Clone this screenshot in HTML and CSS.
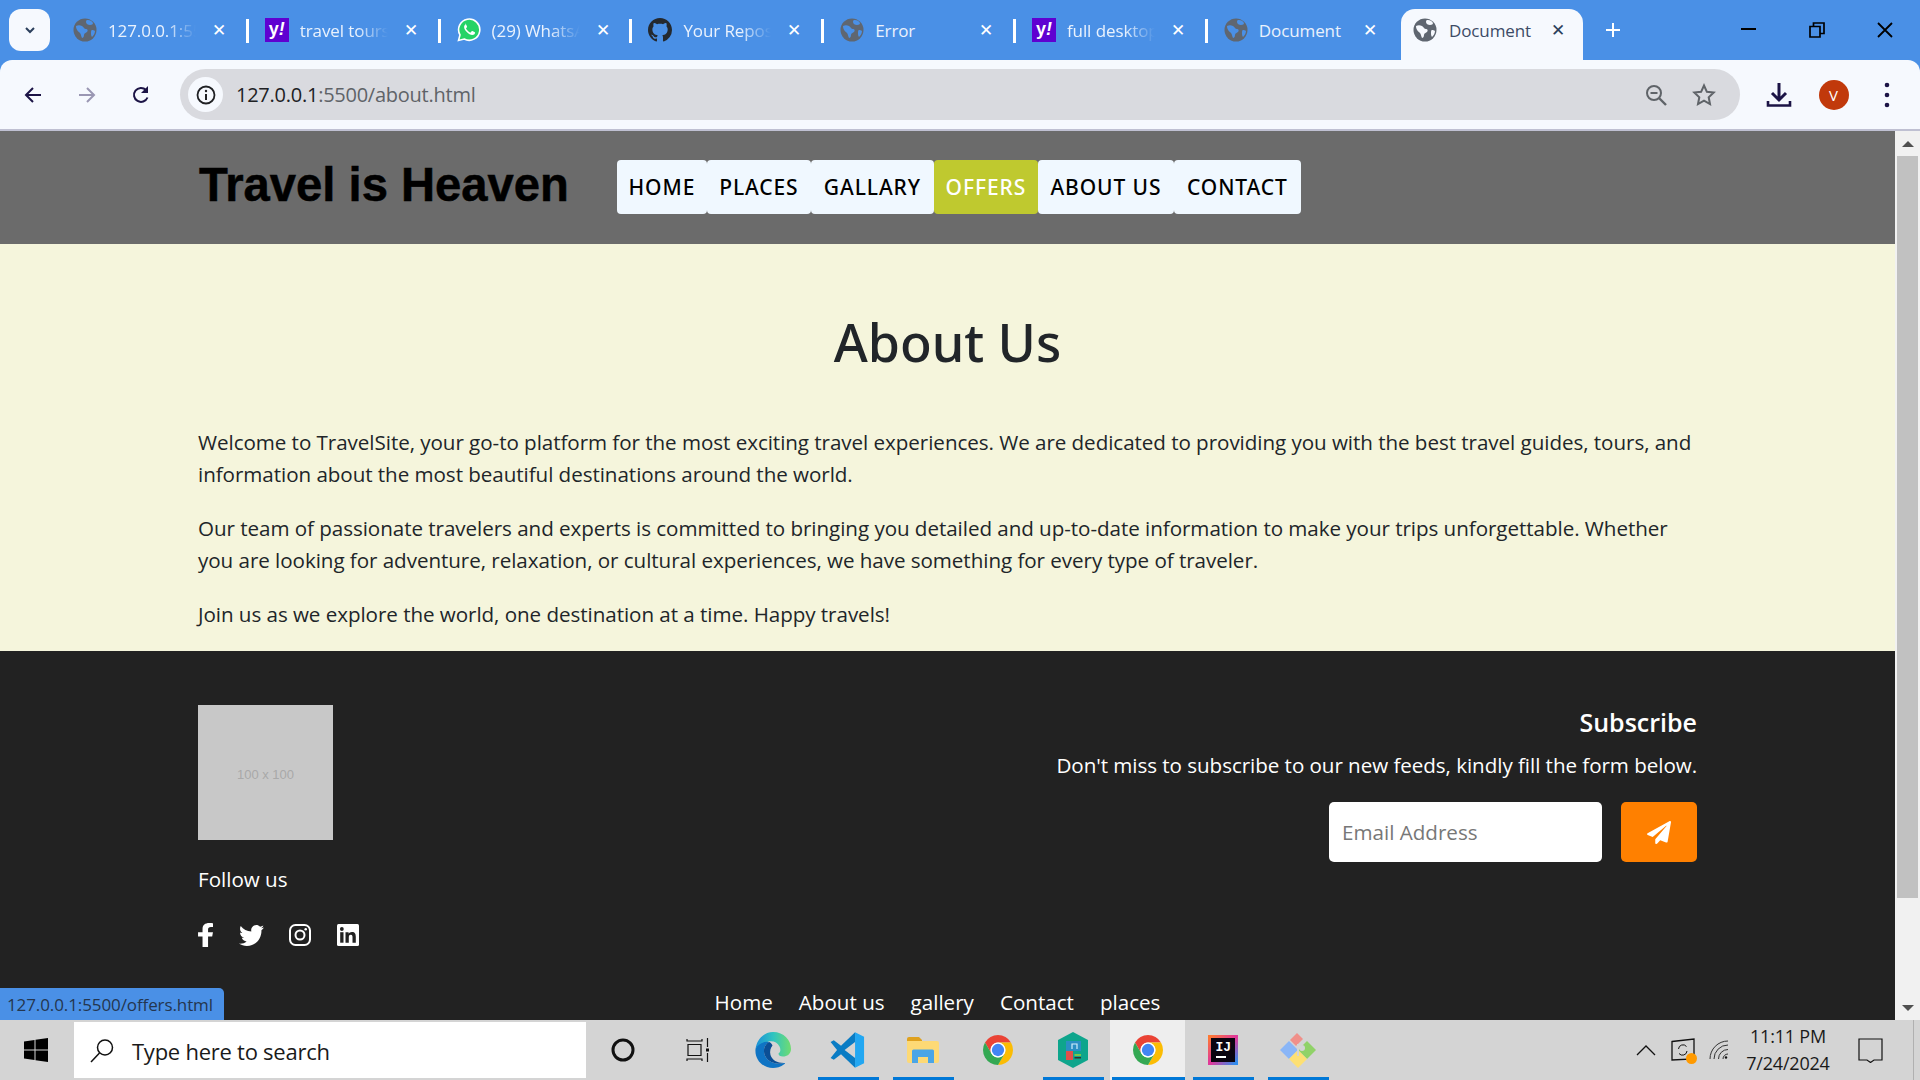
FILE: index.html
```html
<!DOCTYPE html>
<html lang="en">
<head>
    <meta charset="UTF-8">
    <title>Document</title>
    <link rel="stylesheet" href="styles.css">
</head>
<body>
    <svg class="defs" width="0" height="0">
        <symbol id="globe" viewBox="0 0 24 24">
            <circle cx="12" cy="12" r="11.5" fill="#5f6670"/>
            <path fill="currentColor" d="M3 8c2-1 4-1 6 0s2 3 4 3 2 2 1 3-3 1-3 3-1 3-2 3c-1-2-1-4-2-5s-4-3-4-7zM15 2c2 0 4 1 5 3 0 1-1 2-3 2s-4-1-4-3 1-2 2-2zM19 12c1 0 2 0 3 1 0 3-2 5-3 6-1-1-1-3-1-4s0-3 1-3z"/>
        </symbol>
        <symbol id="chrome" viewBox="0 0 48 48">
            <path fill="#ea4335" d="M6.68 14A20 20 0 0 1 41.32 14H24a10 10 0 0 0-8.66 15z"/>
            <path fill="#fbbc04" d="M41.32 14A20 20 0 0 1 24 44l8.66-15A10 10 0 0 0 24 14z"/>
            <path fill="#34a853" d="M24 44A20 20 0 0 1 6.68 14l8.66 15a10 10 0 0 0 17.32 0z"/>
            <circle cx="24" cy="24" r="10" fill="#fff"/>
            <circle cx="24" cy="24" r="8.2" fill="#4285f4"/>
        </symbol>
    </svg>

    <div class="browser">
        <div class="tabstrip">
            <div class="tab-list-btn">
                <svg width="14" height="14" viewBox="0 0 14 14"><path d="M3 5l4 4 4-4" fill="none" stroke="#2b3f5c" stroke-width="2"/></svg>
            </div>
            <div class="tab">
                <svg class="favicon"><use href="#globe"/></svg>
                <span class="tab-title">127.0.0.1:5500</span>
                <span class="tab-close">✕</span>
            </div>
            <div class="tab">
                <span class="favicon yahoo">y<i>!</i></span>
                <span class="tab-title">travel tours</span>
                <span class="tab-close">✕</span>
            </div>
            <div class="tab">
                <svg class="favicon" viewBox="0 0 24 24">
                    <path fill="#25d366" stroke="#fff" stroke-width="1.6" d="M1.5 22.5l1.5-5.6A10.6 10.6 0 1 1 7.2 21z"/>
                    <path fill="#fff" d="M8.6 6.6c-.5 0-1.500.9-1.500 2.400s1 3.200 2.700 5 3.900 3.100 5.500 3.100 2.600-1 2.700-2c0-.6-.1-.8-.5-1l-2.100-1c-.4-.2-.7 0-.9.300l-.8 1c-.2.2-.4.200-.8 0-1.500-.7-3-2.100-3.800-3.600-.1-.3 0-.5.200-.7l.6-.8c.2-.3.200-.5.100-.8l-.9-2.100c-.2-.5-.5-.7-.9-.8z"/>
                </svg>
                <span class="tab-title">(29) WhatsApp</span>
                <span class="tab-close">✕</span>
            </div>
            <div class="tab">
                <svg class="favicon" viewBox="0 0 16 16"><path fill="#24292f" d="M8 0C3.58 0 0 3.58 0 8c0 3.54 2.29 6.53 5.47 7.59.4.07.55-.17.55-.38 0-.19-.01-.82-.01-1.49-2.01.37-2.53-.49-2.69-.94-.09-.23-.48-.94-.82-1.13-.28-.15-.68-.52-.01-.53.63-.01 1.08.58 1.23.82.72 1.21 1.87.87 2.33.66.07-.52.28-.87.51-1.07-1.78-.2-3.64-.89-3.64-3.95 0-.87.31-1.59.82-2.15-.08-.2-.36-1.02.08-2.12 0 0 .67-.21 2.2.82.64-.18 1.32-.27 2-.27.68 0 1.36.09 2 .27 1.53-1.04 2.2-.82 2.2-.82.44 1.1.16 1.92.08 2.12.51.56.82 1.27.82 2.15 0 3.07-1.87 3.75-3.65 3.95.29.25.54.73.54 1.48 0 1.07-.01 1.93-.01 2.2 0 .21.15.46.55.38A8.013 8.013 0 0016 8c0-4.420-3.58-8-8-8z"/></svg>
                <span class="tab-title">Your Repositories</span>
                <span class="tab-close">✕</span>
            </div>
            <div class="tab">
                <svg class="favicon"><use href="#globe"/></svg>
                <span class="tab-title plain">Error</span>
                <span class="tab-close">✕</span>
            </div>
            <div class="tab">
                <span class="favicon yahoo">y<i>!</i></span>
                <span class="tab-title">full desktop</span>
                <span class="tab-close">✕</span>
            </div>
            <div class="tab no-sep">
                <svg class="favicon"><use href="#globe"/></svg>
                <span class="tab-title plain">Document</span>
                <span class="tab-close">✕</span>
            </div>
            <div class="tab active">
                <svg class="favicon"><use href="#globe"/></svg>
                <span class="tab-title plain">Document</span>
                <span class="tab-close">✕</span>
            </div>
            <svg class="new-tab" width="18" height="18" viewBox="0 0 18 18"><path d="M9 2v14M2 9h14" stroke="#fff" stroke-width="2"/></svg>
            <div class="win-btns">
                <svg width="16" height="16" viewBox="0 0 16 16"><path d="M0 7h15" stroke="#000" stroke-width="2"/></svg>
                <svg width="16" height="16" viewBox="0 0 16 16"><path d="M1 4.500h10v10.500h-10zM4.500 4V1h10.500v10.500h-3.500" fill="none" stroke="#000" stroke-width="1.700"/></svg>
                <svg width="16" height="16" viewBox="0 0 16 16"><path d="M1 1l14 14M15 1L1 15" stroke="#000" stroke-width="1.800"/></svg>
            </div>
        </div>

        <div class="toolbar">
            <div class="nav-icons">
                <svg width="20" height="20" viewBox="0 0 20 20"><path d="M18 10H3M10 3l-7 7 7 7" fill="none" stroke="#1c1446" stroke-width="2"/></svg>
                <svg width="20" height="20" viewBox="0 0 20 20"><path d="M2 10h15M10 3l7 7-7 7" fill="none" stroke="#9a97b3" stroke-width="2"/></svg>
                <svg width="20" height="20" viewBox="0 0 20 20"><path d="M16.500 12.500A7 7 0 1 1 15 5" fill="none" stroke="#1c1446" stroke-width="2"/><path d="M17 1v7h-7z" fill="#1c1446"/></svg>
            </div>
            <div class="omnibox">
                <div class="site-info">
                    <svg width="20" height="20" viewBox="0 0 20 20"><circle cx="10" cy="10" r="8.500" fill="none" stroke="#202124" stroke-width="1.800"/><path d="M10 9v6" stroke="#202124" stroke-width="2"/><circle cx="10" cy="6" r="1.200" fill="#202124"/></svg>
                </div>
                <span class="url"><span class="url-host">127.0.0.1</span>:5500/about.html</span>
                <svg class="omni-icon" width="24" height="24" viewBox="0 0 24 24"><circle cx="10" cy="10" r="7" fill="none" stroke="#5f6368" stroke-width="2"/><path d="M15 15l7 7" stroke="#5f6368" stroke-width="2.400"/><path d="M6.500 10h7" stroke="#5f6368" stroke-width="2"/></svg>
                <svg class="omni-icon" width="24" height="24" viewBox="0 0 24 24"><path d="M12 2.500l2.900 6.300 6.800.8-5 4.700 1.300 6.800-6-3.400-6 3.400 1.300-6.800-5-4.700 6.800-.8z" fill="none" stroke="#5f6368" stroke-width="2"/></svg>
            </div>
            <div class="toolbar-end">
                <svg width="26" height="26" viewBox="0 0 26 26"><path d="M13 1v16M6 11l7 7 7-7" fill="none" stroke="#1c1446" stroke-width="3"/><path d="M2 19v4.500h22V19" fill="none" stroke="#1c1446" stroke-width="2.600"/></svg>
                <span class="avatar">V</span>
                <svg width="8" height="28" viewBox="0 0 8 28"><circle cx="4" cy="4" r="2.300" fill="#1c1446"/><circle cx="4" cy="14" r="2.300" fill="#1c1446"/><circle cx="4" cy="24" r="2.300" fill="#1c1446"/></svg>
            </div>
        </div>

        <div class="viewport">
            <div class="page">
                <header class="site-header">
                    <h1 class="brand">Travel is Heaven</h1>
                    <nav class="site-nav">
                        <a class="nav-link n-home">HOME</a>
                        <a class="nav-link n-places">PLACES</a>
                        <a class="nav-link n-gallary">GALLARY</a>
                        <a class="nav-link n-offers">OFFERS</a>
                        <a class="nav-link n-about">ABOUT US</a>
                        <a class="nav-link n-contact">CONTACT</a>
                    </nav>
                </header>

                <section class="about">
                    <h2 class="about-title">About Us</h2>
                    <p>Welcome to TravelSite, your go-to platform for the most exciting travel experiences. We are dedicated to providing you with the best travel guides, tours, and information about the most beautiful destinations around the world.</p>
                    <p>Our team of passionate travelers and experts is committed to bringing you detailed and up-to-date information to make your trips unforgettable. Whether you are looking for adventure, relaxation, or cultural experiences, we have something for every type of traveler.</p>
                    <p>Join us as we explore the world, one destination at a time. Happy travels!</p>
                </section>

                <footer class="site-footer">
                    <div class="footer-top">
                        <div class="footer-left">
                            <div class="placeholder">100 x 100</div>
                            <p class="follow">Follow us</p>
                            <div class="social">
                                <svg class="s-fb" width="15" height="24" viewBox="22 0 272 512" preserveAspectRatio="none"><path fill="#fff" d="M279.14 288l14.22-92.66h-88.91v-60.13c0-25.35 12.42-50.06 52.24-50.06h40.42V6.26S260.43 0 225.36 0c-73.22 0-121.08 44.38-121.08 124.72v70.62H22.89V288h81.39v224h100.17V288z"/></svg>
                                <svg class="s-tw" width="25" height="21" viewBox="0 48 512 416" preserveAspectRatio="none"><path fill="#fff" d="M459.37 151.716c.325 4.548.325 9.097.325 13.645 0 138.72-105.583 298.558-298.558 298.558-59.452 0-114.68-17.219-161.137-47.106 8.447.974 16.568 1.299 25.34 1.299 49.055 0 94.213-16.568 130.274-44.832-46.132-.975-84.792-31.188-98.112-72.772 6.498.974 12.995 1.624 19.818 1.624 9.421 0 18.843-1.3 27.614-3.573-48.081-9.747-84.143-51.98-84.143-102.985v-1.299c13.969 7.797 30.214 12.67 47.431 13.319-28.264-18.843-46.781-51.005-46.781-87.391 0-19.492 5.197-37.36 14.294-52.954 51.655 63.675 129.3 105.258 216.365 109.807-1.624-7.797-2.599-15.918-2.599-24.04 0-57.828 46.782-104.934 104.934-104.934 30.213 0 57.502 12.67 76.67 33.137 23.715-4.548 46.456-13.32 66.599-25.34-7.798 24.366-24.366 44.833-46.132 57.827 21.117-2.273 41.584-8.122 60.426-16.243-14.292 20.791-32.161 39.308-52.628 54.253z"/></svg>
                                <svg class="s-ig" width="22" height="22" viewBox="0 0 22 22"><rect x="1" y="1" width="20" height="20" rx="5.500" fill="none" stroke="#fff" stroke-width="2"/><circle cx="11" cy="11" r="4.500" fill="none" stroke="#fff" stroke-width="2"/><circle cx="16.700" cy="5.300" r="1.300" fill="#fff"/></svg>
                                <svg class="s-in" width="22" height="22" viewBox="0 0 22 22"><rect width="22" height="22" rx="1.500" fill="#fff"/><rect x="3.200" y="8.200" width="3.300" height="10.500" fill="#222"/><circle cx="4.850" cy="5" r="1.900" fill="#222"/><path fill="#222" d="M8.500 8.200h3.100v1.500c.6-1 1.700-1.800 3.300-1.800 3.200 0 3.900 2.100 3.900 4.900v5.900h-3.300v-5.200c0-1.300 0-2.800-1.700-2.800s-2 1.300-2 2.700v5.300H8.500z"/></svg>
                            </div>
                        </div>
                        <div class="footer-right">
                            <h3 class="sub-title">Subscribe</h3>
                            <p class="sub-text">Don't miss to subscribe to our new feeds, kindly fill the form below.</p>
                            <form class="sub-form">
                                <input class="sub-input" type="text" placeholder="Email Address">
                                <button class="sub-btn" type="button">
                                    <svg width="24" height="23" viewBox="0 0 512 512" preserveAspectRatio="none"><path fill="#fff" d="M476 3.2L12.500 270.600c-18.100 10.400-15.800 35.600 2.200 43.200L121 358.400l287.300-253.200c5.500-4.900 13.300 2.600 8.600 8.300L176 407v80.500c0 23.600 28.500 32.900 42.500 15.800L282 426l124.600 52.200c14.200 6 30.400-2.900 33-18.200l72-432C515 7.800 493.300-6.800 476 3.200z"/></svg>
                                </button>
                            </form>
                        </div>
                    </div>
                    <nav class="footer-nav">
                        <a>Home</a>
                        <a>About us</a>
                        <a>gallery</a>
                        <a>Contact</a>
                        <a>places</a>
                    </nav>
                </footer>
            </div>
            <div class="scrollbar">
                <span class="arrow up"></span>
                <span class="thumb"></span>
                <span class="arrow down"></span>
            </div>
            <div class="status-bubble">127.0.0.1:5500/offers.html</div>
        </div>
    </div>

    <div class="taskbar">
        <div class="start">
            <svg width="24" height="24" viewBox="0 0 24 24"><path fill="#000" d="M0 3.500l10.500-1.500v9.500H0zM11.500 1.800L24 0v11.500H11.500zM0 12.500h10.500V22L0 20.500zM11.500 12.500H24V24l-12.500-1.800z"/></svg>
        </div>
        <div class="search">
            <svg width="25" height="25" viewBox="0 0 25 25"><circle cx="15" cy="9.500" r="7.500" fill="none" stroke="#111" stroke-width="1.500"/><path d="M9.500 15L1 24" stroke="#111" stroke-width="1.500"/></svg>
            <span>Type here to search</span>
        </div>
        <div class="slot first">
            <svg width="24" height="24" viewBox="0 0 24 24"><circle cx="12" cy="12" r="10" fill="none" stroke="#111" stroke-width="3"/></svg>
        </div>
        <div class="slot">
            <svg width="24" height="24" viewBox="0 0 24 24"><path d="M1 1v2h15V1M1 23v-2h15v2M2 6.500h13v11H2zM21.500 0v9M21.500 15v9" fill="none" stroke="#111" stroke-width="1.200"/><rect x="20" y="10.500" width="3" height="3" fill="#111"/></svg>
        </div>
        <div class="slot">
            <svg width="36" height="36" viewBox="0 0 36 36">
                <defs>
                    <linearGradient id="edgeTop" x1="0" y1="0.500" x2="1" y2="0.500"><stop offset="0" stop-color="#1a8fd8"/><stop offset="0.500" stop-color="#30c4c0"/><stop offset="1" stop-color="#70dc70"/></linearGradient>
                </defs>
                <path fill="url(#edgeTop)" d="M0.500 17C2 6 10 0 18 0c11 0 18 8 18 17 0 5-4 7.500-8 7.500-3 0-4.500-1.200-4.500-3 2-1.500 2.500-3.700 1-7C22 9 15 8 10 11 5 14 2 15 .5 17z"/>
                <path fill="#0f74c4" d="M.5 17C3 12 9 9 14 10 8.500 13 7.500 20 11 25.500c3 4.500 10 7.500 18 5.500 1-.3 1.500.3.5 1C25.500 35 21.500 36 18 36 8 36-.5 28 .5 17z"/>
                <path fill="#0b4f96" d="M14 10c-5.500 3-6.500 10-3 15.500 3 4.500 10 7.500 18 5.500-7 0-12-3-13.500-8-1-4 0-7 2-9.500-1-2-2.500-3.500-3.500-3.500z"/>
            </svg>
        </div>
        <div class="slot running">
            <svg width="37" height="36" viewBox="0 0 100 100"><path fill="#22a7f2" d="M71 1l25 12v74L71 99z"/><path fill="#0a7cc4" d="M71 1L32 38 12 23 3 28l18 22L3 72l9 5 20-15 39 37V72L42 50l29-22z"/></svg>
        </div>
        <div class="slot running">
            <svg width="32" height="26" viewBox="0 0 32 26"><path fill="#dfa11e" d="M0 2a2 2 0 0 1 2-2h10l3 3v3H0z"/><path fill="#fdd975" d="M0 4h30a2 2 0 0 1 2 2v18a2 2 0 0 1-2 2H2a2 2 0 0 1-2-2z"/><path fill="#4aa5e6" d="M5 26V14a1.500 1.500 0 0 1 1.500-1.500h19A1.500 1.500 0 0 1 27 14v12h-6v-6H11v6z"/></svg>
        </div>
        <div class="slot">
            <svg width="36" height="36"><use href="#chrome"/></svg>
        </div>
        <div class="slot running">
            <svg width="32" height="36" viewBox="0 0 32 36"><path fill="#0ea58c" d="M16 0l15 8v20l-15 8-15-8V8z"/><rect x="9" y="9" width="15" height="10" fill="#2a8fc4"/><path d="M15 17v-5h5v5" fill="none" stroke="#cfeefa" stroke-width="1.200"/><rect x="9" y="19" width="7" height="9" fill="#e0504a"/><rect x="17.500" y="22" width="6.500" height="2" fill="#7cc44a"/><rect x="17.500" y="25" width="6.500" height="1.500" fill="#333"/></svg>
        </div>
        <div class="slot running active">
            <svg width="36" height="36"><use href="#chrome"/></svg>
        </div>
        <div class="slot running">
            <div class="ij-logo">
                <span class="ij-text">IJ</span>
                <span class="ij-bar"></span>
            </div>
        </div>
        <div class="slot running">
            <svg width="36" height="36" viewBox="0 0 36 36"><path fill="#8ab6f7" d="M0 18l9-9 9 9-9 9z"/><path fill="#f0908a" d="M10 8l7-7 6 6-7 7z"/><path fill="#90d268" d="M18 18l9-9 9 9-9 9z"/><path fill="#fde074" d="M9 27l9-9 9 9-9 9z"/><circle cx="22" cy="16" r="3" fill="#d4d4d4"/><path d="M18 12v12" stroke="#d4d4d4" stroke-width="2"/></svg>
        </div>
        <div class="tray">
            <div class="tray-slot">
                <svg width="20" height="12" viewBox="0 0 20 12"><path d="M1 11l9-9 9 9" fill="none" stroke="#111" stroke-width="1.300"/></svg>
            </div>
            <div class="tray-slot badge-host">
                <svg width="24" height="24" viewBox="0 0 24 24"><path d="M1 3.500L23 1v20l-22 1z" fill="none" stroke="#111" stroke-width="1.300"/><path d="M7.500 11a4.500 4.500 0 0 1 8-2.500M16 13a4.500 4.500 0 0 1-8 2.500" fill="none" stroke="#111"/></svg>
                <span class="tray-badge"></span>
            </div>
            <div class="tray-slot">
                <svg width="20" height="20" viewBox="0 0 20 20"><path d="M1 19a18 18 0 0 1 18-18M5 19a14 14 0 0 1 14-14M9.500 19A9.500 9.500 0 0 1 19 9.500M14 19a5 5 0 0 1 5-5" fill="none" stroke="#333" stroke-width="1"/><circle cx="17" cy="17.500" r="1.200" fill="#111"/></svg>
            </div>
            <div class="clock">
                <span>11:11 PM</span>
                <span>7/24/2024</span>
            </div>
            <div class="notify">
                <svg width="25" height="25" viewBox="0 0 25 25"><path d="M1 1h23v21h-8l-3.500 2.500L9 22H1z" fill="none" stroke="#111" stroke-width="1.200"/></svg>
            </div>
            <div class="show-desktop"></div>
        </div>
    </div>
</body>
</html>
```

FILE: styles.css
```css
* {
    box-sizing: border-box;
}

html, body {
    margin: 0;
    padding: 0;
    height: 100%;
    overflow: hidden;
}

body {
    width: 1920px;
    height: 1080px;
    font-family: "Open Sans", "Noto Sans", sans-serif;
    display: flex;
    flex-direction: column;
    background-color: #4a90e6;
}

.defs {
    position: absolute;
}

p, h1, h2, h3 {
    margin: 0;
}

.browser {
    height: 1020px;
    display: flex;
    flex-direction: column;
}

/* tab strip */
.tabstrip {
    height: 60px;
    flex: none;
    display: flex;
    align-items: flex-start;
    padding: 9px 0 0 9px;
    background-color: #4a90e6;
}

.tab-list-btn {
    width: 41px;
    height: 42px;
    margin-right: 5px;
    background-color: #f6f9fe;
    border-radius: 12px;
    display: flex;
    align-items: center;
    justify-content: center;
}

.tab {
    width: 191.8px;
    height: 51px;
    padding: 9px 0 0 18px;
    display: flex;
    align-items: flex-start;
    position: relative;
    color: #4a90e6;
}

.tab::after {
    content: "";
    position: absolute;
    right: -2px;
    top: 10px;
    width: 3px;
    height: 24px;
    background-color: #fff;
}

.tab.no-sep {
    width: 195.2px;
}

.tab.no-sep::after, .tab.active::after {
    display: none;
}

.favicon {
    width: 24px;
    height: 24px;
    flex: none;
}

.yahoo {
    background-color: #5f01d1;
    color: #fff;
    font-family: "Liberation Sans", sans-serif;
    font-weight: bold;
    font-size: 18px;
    line-height: 22px;
    text-align: center;
}

.tab-title {
    width: 88px;
    margin-left: 11px;
    font-size: 17px;
    line-height: 26px;
    color: #eaf2fd;
    white-space: nowrap;
    overflow: hidden;
    letter-spacing: -0.1px;
    -webkit-mask-image: linear-gradient(to right, #000 65%, transparent 100%);
}

.tab-title.plain {
    -webkit-mask-image: none;
}

.tab-close {
    position: absolute;
    left: 156px;
    top: 8px;
    width: 16px;
    font-size: 17px;
    line-height: 26px;
    text-align: center;
    color: #fff;
}

.tab.active {
    width: 182px;
    padding: 9px 0 0 12px;
    background-color: #f6f9fe;
    border-radius: 14px 14px 0 0;
    color: #f6f9fe;
}

.tab.active::before {
    content: "";
    position: absolute;
    left: -12px;
    right: -12px;
    bottom: 0;
    height: 12px;
    z-index: -1;
    background: #f6f9fe;
}

.tab.active .tab-title {
    color: #3c4b66;
    width: 100px;
    margin-left: 12px;
}

.tab.active .tab-close {
    left: 149px;
    color: #2b3f5c;
}

.tab.active .favicon {
    color: #f6f9fe;
}

.new-tab {
    margin: 12px 0 0 21px;
}

.win-btns {
    margin-left: auto;
    width: 205px;
    padding: 13px 27px 0 26px;
    display: flex;
    justify-content: space-between;
}

/* toolbar */
.toolbar {
    height: 71px;
    flex: none;
    padding: 9px 0 9px 0;
    display: flex;
    background-color: #f6f9fe;
    border-bottom: 2px solid #bfc0d2;
    border-radius: 12px 12px 0 0;
    position: relative;
}

.nav-icons {
    width: 180px;
    padding: 0 29px 0 23px;
    display: flex;
    align-items: center;
    justify-content: space-between;
}

.omnibox {
    width: 1560px;
    height: 51px;
    padding: 0 24px 0 8px;
    display: flex;
    align-items: center;
    gap: 24px;
    border-radius: 26px;
    background-color: #d9dadf;
}

.site-info {
    width: 35px;
    height: 35px;
    margin-right: -11px;
    border-radius: 50%;
    background-color: #f6f9fe;
    display: flex;
    align-items: center;
    justify-content: center;
}

.url {
    flex: 1;
    font-size: 20px;
    letter-spacing: -0.25px;
    color: #5f6368;
}

.url-host {
    color: #202124;
}

.toolbar-end {
    flex: 1;
    padding: 0 29px 0 26px;
    display: flex;
    align-items: center;
    justify-content: space-between;
}

.avatar {
    width: 30px;
    height: 30px;
    margin-right: 8px;
    border-radius: 50%;
    background-color: #c1390b;
    color: #fff;
    font-size: 15px;
    line-height: 30px;
    text-align: center;
}

/* page */
.viewport {
    flex: 1;
    min-height: 0;
    display: flex;
    position: relative;
}

.page {
    flex: 1;
    overflow: hidden;
    display: flex;
    flex-direction: column;
}

.site-header {
    height: 113px;
    flex: none;
    padding: 0 0 0 199px;
    display: flex;
    align-items: center;
    gap: 48px;
    background-color: #6b6b6b;
}

.brand {
    font-family: "Liberation Sans", Arial, sans-serif;
    font-size: 47.2px;
    font-weight: bold;
    color: #000;
    margin-top: -6px;
    -webkit-text-stroke: 0.5px #000;
}

.site-nav {
    display: flex;
    margin-top: -1px;
}

.nav-link {
    height: 54px;
    display: flex;
    align-items: center;
    justify-content: center;
    background-color: #f0f8ff;
    border-radius: 4px;
    color: #000;
    font-family: "Noto Sans", "Open Sans", sans-serif;
    font-size: 21px;
    font-weight: 500;
    letter-spacing: 0.9px;
}

.n-home { width: 90px; }
.n-places { width: 104px; }
.n-gallary { width: 123px; }
.n-offers { width: 104px; background-color: #bfc92f; color: #fff; }
.n-about { width: 136px; }
.n-contact { width: 127px; }

.about {
    height: 407px;
    flex: none;
    padding: 67px 198px 0;
    background-color: #f5f5dc;
    color: #212529;
    font-size: 20.6px;
    line-height: 32px;
    letter-spacing: -0.05px;
}

.about-title {
    font-family: "Noto Sans", "Open Sans", sans-serif;
    font-size: 52px;
    font-weight: 500;
    line-height: 62px;
    text-align: center;
    margin-bottom: 52.5px;
}

.about p {
    margin-bottom: 22px;
}

.site-footer {
    flex: 1;
    background-color: #222;
    color: #fff;
    padding: 54px 198px 0;
    display: flex;
    flex-direction: column;
}

.footer-top {
    height: 281px;
    display: flex;
    justify-content: space-between;
}

.placeholder {
    width: 135px;
    height: 135px;
    padding-top: 4px;
    background-color: #c8c8c8;
    color: #a9a9a9;
    font-family: "Liberation Sans", sans-serif;
    font-size: 13px;
    display: flex;
    align-items: center;
    justify-content: center;
}

.follow {
    margin-top: 23px;
    font-size: 20.6px;
    line-height: 32px;
}

.social {
    margin-top: 28px;
    display: flex;
    align-items: center;
}

.s-tw { margin-left: 26px; }
.s-ig { margin-left: 25px; }
.s-in { margin-left: 26px; }

.footer-right {
    text-align: right;
}

.sub-title {
    margin-top: -1px;
    font-size: 25px;
    font-weight: 600;
    line-height: 36px;
}

.sub-text {
    margin-top: 9px;
    font-size: 20.6px;
    line-height: 32px;
    letter-spacing: -0.05px;
}

.sub-form {
    margin-top: 21px;
    display: flex;
    justify-content: flex-end;
    gap: 19px;
}

.sub-input {
    width: 273px;
    height: 60px;
    padding: 0 13px;
    border: 0;
    border-radius: 5px;
    background-color: #fff;
    font-family: inherit;
    font-size: 20.6px;
}

.sub-input::placeholder {
    color: #777;
}

.sub-btn {
    width: 76px;
    height: 60px;
    padding: 0;
    border: 0;
    border-radius: 5px;
    background-color: #ff8000;
    display: flex;
    align-items: center;
    justify-content: center;
}

.footer-nav {
    display: flex;
    justify-content: center;
    gap: 26px;
    padding-right: 20px;
    font-size: 20.6px;
    line-height: 32px;
}

.scrollbar {
    width: 25px;
    flex: none;
    padding: 0 2px 0 2px;
    display: flex;
    flex-direction: column;
    align-items: center;
    background-color: #f1f1f1;
}

.arrow {
    width: 0;
    height: 0;
    border-left: 6px solid transparent;
    border-right: 6px solid transparent;
}

.arrow.up {
    margin-top: 10px;
    border-bottom: 6px solid #505050;
}

.arrow.down {
    margin-top: 107px;
    border-top: 6px solid #505050;
}

.thumb {
    width: 21px;
    height: 742px;
    margin-top: 9px;
    background-color: #c1c1c1;
}

.status-bubble {
    position: absolute;
    left: 0;
    bottom: 0;
    width: 224px;
    height: 32px;
    padding-left: 7px;
    background-color: #4a90e6;
    border-top-right-radius: 5px;
    color: #24364f;
    font-size: 17px;
    line-height: 33px;
    letter-spacing: -0.1px;
    white-space: nowrap;
}

/* windows taskbar */
.taskbar {
    height: 60px;
    flex: none;
    display: flex;
    background-color: #d4d4d4;
}

.start {
    width: 74px;
    display: flex;
    align-items: center;
    justify-content: center;
    padding-right: 2px;
}

.search {
    width: 512px;
    height: 56px;
    margin-top: 2px;
    padding: 2px 0 0 16px;
    display: flex;
    align-items: center;
    gap: 17px;
    background-color: #fff;
    color: #1a1a1a;
    font-size: 22px;
    letter-spacing: -0.25px;
}

.search svg {
    margin-top: -2px;
}

.slot {
    width: 75px;
    display: flex;
    align-items: center;
    justify-content: center;
    position: relative;
}

.slot.first {
    margin-left: -1px;
}

.slot.running::after {
    content: "";
    position: absolute;
    left: 8px;
    right: 6px;
    bottom: 0;
    height: 3px;
    background-color: #0078d7;
}

.slot.active {
    background-color: #eeeeee;
}

.slot.active::after {
    left: 2px;
    right: 0;
}

.ij-logo {
    width: 30px;
    height: 30px;
    padding: 4px 5px;
    border: 3px solid #2a7df0;
    border-image: linear-gradient(135deg, #ff7a30, #e0389a, #2a90f0) 1;
    background-color: #0a0410;
    display: flex;
    flex-direction: column;
    justify-content: space-between;
}

.ij-text {
    font-family: "Liberation Mono", monospace;
    font-size: 13px;
    font-weight: bold;
    line-height: 11px;
    color: #fff;
}

.ij-bar {
    width: 10px;
    height: 2px;
    background-color: #fff;
}

.tray {
    margin-left: auto;
    display: flex;
}

.tray-slot {
    width: 36px;
    display: flex;
    align-items: center;
    justify-content: center;
    position: relative;
}

.tray-slot:first-child svg {
    margin-left: -2px;
}

.tray-badge {
    position: absolute;
    left: 21px;
    top: 33px;
    width: 11px;
    height: 11px;
    border-radius: 50%;
    background-color: #ff9a00;
}

.clock {
    width: 102px;
    padding-top: 3px;
    display: flex;
    flex-direction: column;
    align-items: center;
    color: #1a1a1a;
    font-size: 18px;
    line-height: 27px;
    letter-spacing: -0.2px;
}

.notify {
    width: 62px;
    display: flex;
    align-items: center;
    justify-content: center;
}

.show-desktop {
    width: 19px;
    background: linear-gradient(to right, transparent 12px, #b0b0b0 12px, #b0b0b0 13px, transparent 13px);
}
```
